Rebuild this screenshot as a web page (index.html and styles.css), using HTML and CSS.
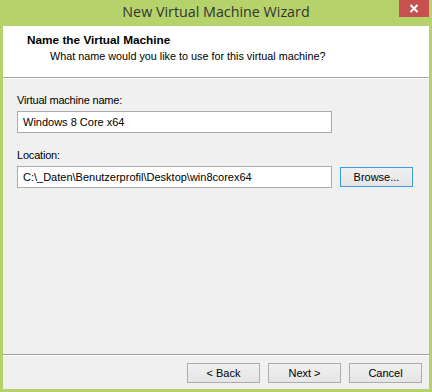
FILE: index.html
```html
<!DOCTYPE html>
<html lang="en">
<head>
    <meta charset="UTF-8">
    <title>New Virtual Machine Wizard</title>
    <link rel="stylesheet" href="styles.css">
</head>
<body>
    <div class="window">
        <!-- Title bar -->
        <div class="titlebar">
            <div></div>
            <div class="title">New Virtual Machine Wizard</div>
            <button class="close-button" type="button">
                <svg width="10" height="9" viewBox="0 0 10 9">
                    <path d="M1.5 1 L8.5 8 M8.5 1 L1.5 8" stroke="#ffffff" stroke-width="2" fill="none"/>
                </svg>
            </button>
        </div>

        <div class="client">
            <!-- Wizard header -->
            <div class="header">
                <div class="header-title">Name the Virtual Machine</div>
                <div class="header-text">What name would you like to use for this virtual machine?</div>
            </div>

            <!-- Page content -->
            <div class="page">
                <div class="field">
                    <label for="vmName">Virtual machine name:</label>
                    <input type="text" id="vmName" class="textbox" value="Windows 8 Core x64">
                </div>
                <div class="field">
                    <label for="location">Location:</label>
                    <div class="row">
                        <input type="text" id="location" class="textbox" value="C:\_Daten\Benutzerprofil\Desktop\win8corex64">
                        <button type="button" class="btn btn-default">Browse...</button>
                    </div>
                </div>
            </div>

            <!-- Buttons -->
            <div class="footer">
                <button type="button" class="btn">&lt; Back</button>
                <button type="button" class="btn">Next &gt;</button>
                <button type="button" class="btn">Cancel</button>
            </div>
        </div>
    </div>
</body>
</html>
```

FILE: styles.css
```css
body {
    margin: 0;
    padding: 0;
    background: #b6d36b;
    font-family: 'Liberation Sans', Arial, sans-serif;
}

.window {
    width: 432px;
    height: 392px;
    box-sizing: border-box;
    background: #b6d36b;
    padding: 0 3px 3px 3px;
    display: flex;
    flex-direction: column;
}

.titlebar {
    height: 26px;
    display: grid;
    grid-template-columns: 1fr auto 1fr;
    align-items: start;
}

.title {
    font-family: 'Open Sans', sans-serif;
    font-size: 14.3px;
    line-height: 24px;
    color: #333333;
}

.close-button {
    justify-self: end;
    width: 30px;
    height: 17px;
    margin: 0;
    padding: 0;
    border: none;
    background: #c75050;
    display: flex;
    align-items: center;
    justify-content: center;
}

.client {
    flex: 1;
    display: flex;
    flex-direction: column;
    background: #f0f0f0;
}

/* White header with title and description */
.header {
    height: 51px;
    background: #ffffff;
    border-bottom: 1px solid #a0a0a0;
    box-sizing: content-box;
    padding: 0 0 0 24px;
}

.header-title {
    font-weight: bold;
    font-size: 11.8px;
    line-height: 15px;
    margin-top: 7px;
    color: #000;
}

.header-text {
    font-size: 10.8px;
    line-height: 15px;
    margin: 1px 0 0 23px;
    color: #000;
}

.page {
    flex: 1;
    border-top: 1px solid #ffffff;
    padding: 14px 14px 0 14px;
}

.field {
    display: flex;
    flex-direction: column;
    gap: 3px;
    margin-bottom: 15px;
}

.field label {
    font-size: 11px;
    line-height: 15px;
    letter-spacing: -0.2px;
    color: #000;
}

.row {
    display: flex;
    align-items: center;
    gap: 8px;
}

.textbox {
    width: 315px;
    height: 22px;
    box-sizing: border-box;
    margin: 0;
    border: 1px solid #ababab;
    background: #ffffff;
    padding: 0 5px;
    font-family: 'Liberation Sans', Arial, sans-serif;
    font-size: 11px;
    color: #000;
    outline: none;
}

.btn {
    width: 73px;
    height: 20px;
    box-sizing: border-box;
    margin: 0;
    padding: 0;
    border: 1px solid #acacac;
    background: linear-gradient(#f0f0f0, #e5e5e5);
    font-family: 'Liberation Sans', Arial, sans-serif;
    font-size: 11px;
    color: #000;
}

.btn-default {
    border-color: #3c9ae6;
}

.footer {
    border-top: 1px solid #a0a0a0;
    box-shadow: inset 0 1px 0 #ffffff;
    padding: 8px 7px 6px 0;
    display: flex;
    justify-content: flex-end;
    gap: 8px;
}
```
